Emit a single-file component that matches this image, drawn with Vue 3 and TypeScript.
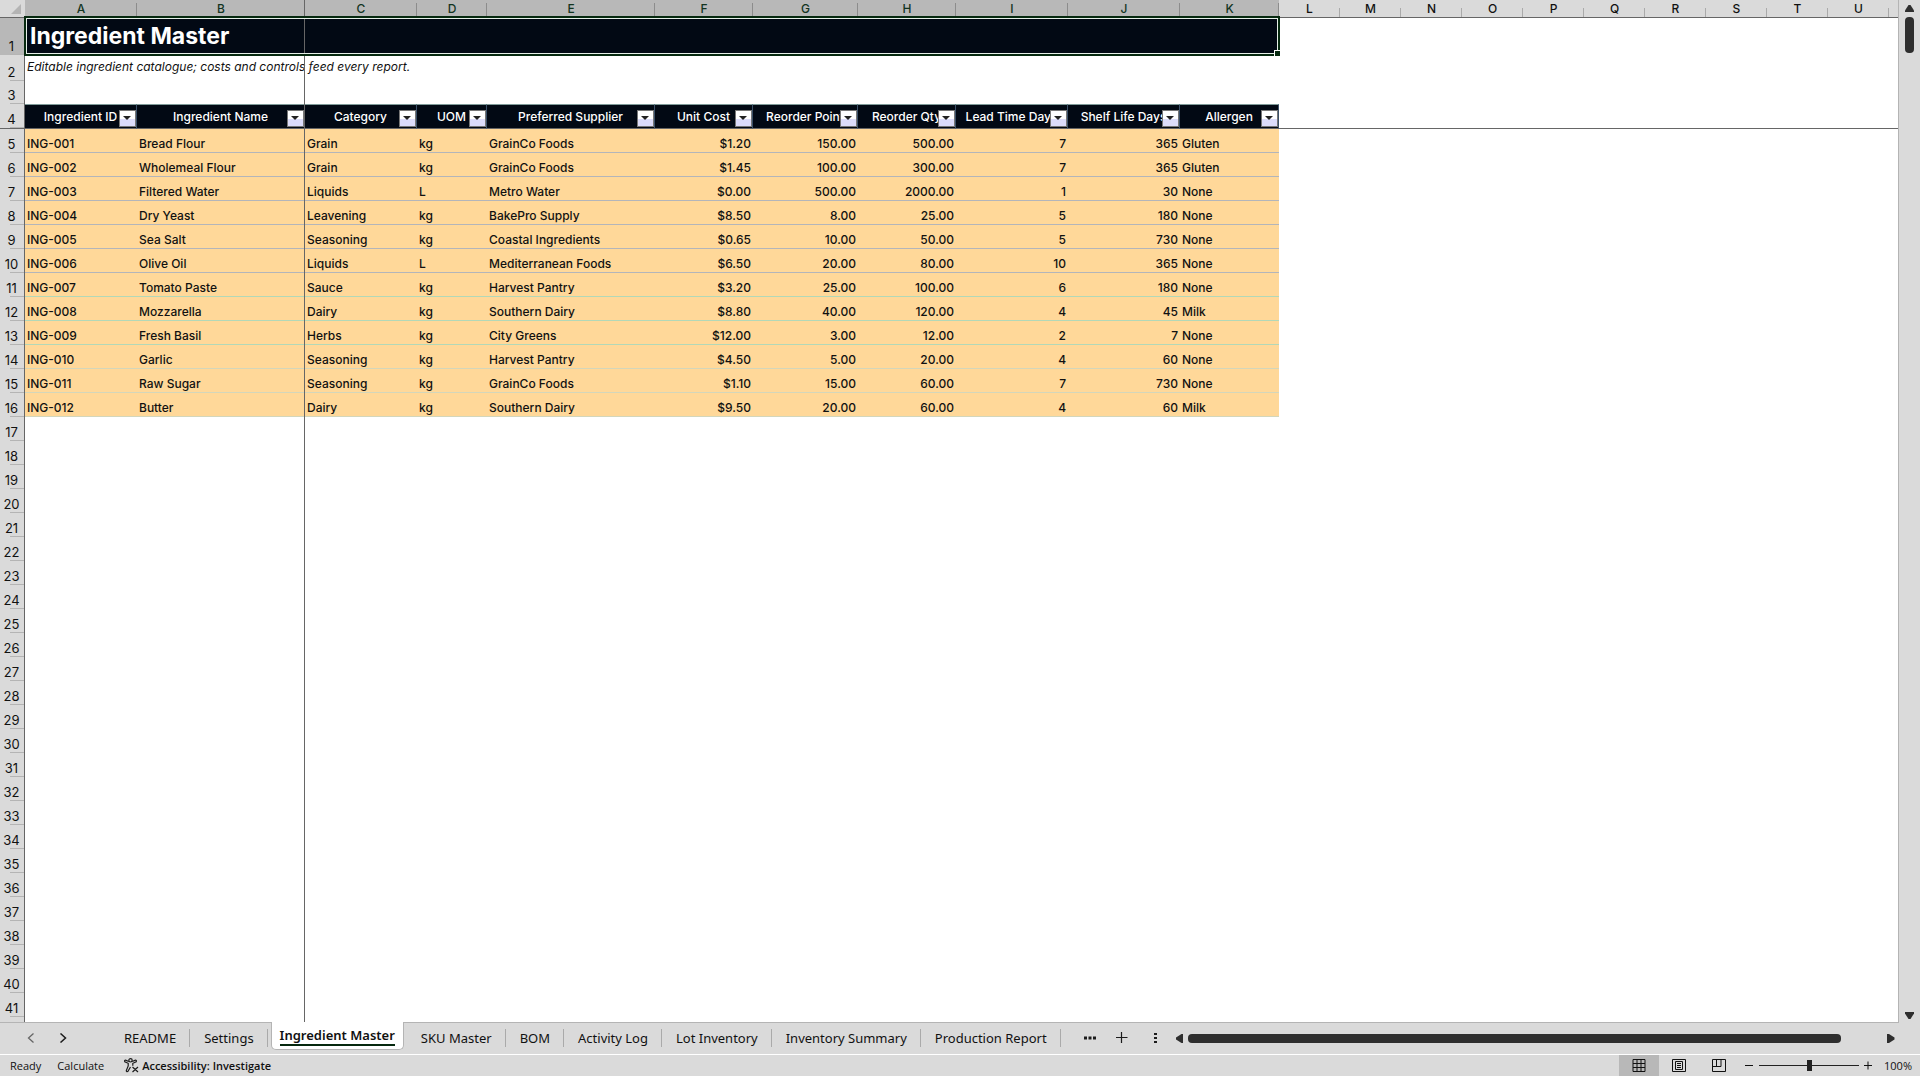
<script setup lang="ts">
import { ref } from 'vue'

interface Column {
  letter: string
  width: number
  title?: string
  numeric?: boolean
}

const columns: Column[] = [
  { letter: 'A', width: 112, title: 'Ingredient ID' },
  { letter: 'B', width: 168, title: 'Ingredient Name' },
  { letter: 'C', width: 112, title: 'Category' },
  { letter: 'D', width: 70, title: 'UOM' },
  { letter: 'E', width: 168, title: 'Preferred Supplier' },
  { letter: 'F', width: 98, title: 'Unit Cost', numeric: true },
  { letter: 'G', width: 105, title: 'Reorder Point', numeric: true },
  { letter: 'H', width: 98, title: 'Reorder Qty', numeric: true },
  { letter: 'I', width: 112, title: 'Lead Time Days', numeric: true },
  { letter: 'J', width: 112, title: 'Shelf Life Days', numeric: true },
  { letter: 'K', width: 99, title: 'Allergen' },
  ...'LMNOPQRSTU'.split('').map((letter) => ({ letter, width: 61 })),
]
const dataColumns = columns.filter((c) => c.title)
const spareColumns = columns.length - dataColumns.length + 1

const ingredients: string[][] = [
  ['ING-001', 'Bread Flour', 'Grain', 'kg', 'GrainCo Foods', '$1.20', '150.00', '500.00', '7', '365', 'Gluten'],
  ['ING-002', 'Wholemeal Flour', 'Grain', 'kg', 'GrainCo Foods', '$1.45', '100.00', '300.00', '7', '365', 'Gluten'],
  ['ING-003', 'Filtered Water', 'Liquids', 'L', 'Metro Water', '$0.00', '500.00', '2000.00', '1', '30', 'None'],
  ['ING-004', 'Dry Yeast', 'Leavening', 'kg', 'BakePro Supply', '$8.50', '8.00', '25.00', '5', '180', 'None'],
  ['ING-005', 'Sea Salt', 'Seasoning', 'kg', 'Coastal Ingredients', '$0.65', '10.00', '50.00', '5', '730', 'None'],
  ['ING-006', 'Olive Oil', 'Liquids', 'L', 'Mediterranean Foods', '$6.50', '20.00', '80.00', '10', '365', 'None'],
  ['ING-007', 'Tomato Paste', 'Sauce', 'kg', 'Harvest Pantry', '$3.20', '25.00', '100.00', '6', '180', 'None'],
  ['ING-008', 'Mozzarella', 'Dairy', 'kg', 'Southern Dairy', '$8.80', '40.00', '120.00', '4', '45', 'Milk'],
  ['ING-009', 'Fresh Basil', 'Herbs', 'kg', 'City Greens', '$12.00', '3.00', '12.00', '2', '7', 'None'],
  ['ING-010', 'Garlic', 'Seasoning', 'kg', 'Harvest Pantry', '$4.50', '5.00', '20.00', '4', '60', 'None'],
  ['ING-011', 'Raw Sugar', 'Seasoning', 'kg', 'GrainCo Foods', '$1.10', '15.00', '60.00', '7', '730', 'None'],
  ['ING-012', 'Butter', 'Dairy', 'kg', 'Southern Dairy', '$9.50', '20.00', '60.00', '4', '60', 'Milk'],
]
const emptyRows = Array.from({ length: 25 }, (_, i) => i + 17)

function ruleTone(index: number): string {
  if (index < 6) return 'rule-grey'
  return index < 9 ? 'rule-green' : 'rule-pale'
}

const tabs = ['README', 'Settings', 'Ingredient Master', 'SKU Master', 'BOM', 'Activity Log', 'Lot Inventory', 'Inventory Summary', 'Production Report']
const activeTab = ref('Ingredient Master')
const zoom = ref(100)
</script>

<template>
  <div class="workbook">
    <main class="body">
      <div class="sheet">
        <table>
          <colgroup>
            <col class="gutter" />
            <col v-for="c in columns" :key="c.letter" :style="{ width: c.width + 'px' }" />
            <col />
          </colgroup>
          <thead>
            <tr class="letters">
              <th class="corner" aria-label="Select all">
                <svg width="10" height="10" viewBox="0 0 10 10"><path d="M10 0v10H0z" fill="#b4b4b4" /></svg>
              </th>
              <th v-for="c in columns" :key="c.letter" scope="col" :class="{ picked: c.title }">{{ c.letter }}</th>
              <th class="rest"></th>
            </tr>
          </thead>
          <tbody>
            <tr class="row-title">
              <th scope="row" class="picked">1</th>
              <td :colspan="dataColumns.length" class="title">
                Ingredient Master
                <span class="selection"><i class="handle"></i></span>
              </td>
              <td :colspan="spareColumns"></td>
            </tr>
            <tr class="row-note">
              <th scope="row">2</th>
              <td :colspan="columns.length + 1" class="note">Editable ingredient catalogue; costs and controls feed every report.</td>
            </tr>
            <tr class="row-gap">
              <th scope="row">3</th>
              <td :colspan="columns.length + 1"></td>
            </tr>
            <tr class="row-fields">
              <th scope="row">4</th>
              <th v-for="c in dataColumns" :key="c.letter" scope="col" class="field">
                {{ c.title }}
                <button type="button" class="filter" :aria-label="'Filter ' + c.title">
                  <svg width="9" height="5" viewBox="0 0 9 5"><path d="M0 0h8L4 4z" fill="#222" /></svg>
                </button>
              </th>
              <td :colspan="spareColumns"></td>
            </tr>
            <tr v-for="(row, r) in ingredients" :key="row[0]" :class="ruleTone(r)">
              <th scope="row">{{ r + 5 }}</th>
              <td v-for="(value, i) in row" :key="i" class="cell" :class="{ number: columns[i].numeric }">{{ value }}</td>
              <td :colspan="spareColumns"></td>
            </tr>
            <tr v-for="n in emptyRows" :key="n">
              <th scope="row">{{ n }}</th>
              <td :colspan="columns.length + 1"></td>
            </tr>
            <tr>
              <th scope="row"></th>
              <td :colspan="columns.length + 1"></td>
            </tr>
          </tbody>
        </table>
        <div class="freeze"></div>
      </div>
      <div class="vscroll">
        <button type="button" aria-label="Scroll up"><svg width="9" height="7" viewBox="0 0 9 7"><path d="M3.500 0h2L9 5.500V7H0V5.500z" fill="#2e2e2e" /></svg></button>
        <div class="vthumb"></div>
        <button type="button" class="down" aria-label="Scroll down"><svg width="9" height="7" viewBox="0 0 9 7"><path d="M3.500 7h2L9 1.500V0H0v1.500z" fill="#2e2e2e" /></svg></button>
      </div>
    </main>

    <div class="tabbar">
      <div class="tabside">
        <div class="arrows">
          <button type="button" aria-label="Previous sheets"><svg width="8" height="10" viewBox="0 0 8 10"><path d="M6.500.5 1.500 5l5 4.500" fill="none" stroke="#666" stroke-width="1.300" /></svg></button>
          <button type="button" aria-label="Next sheets"><svg width="8" height="10" viewBox="0 0 8 10"><path d="M1.500.5 6.500 5l-5 4.500" fill="none" stroke="#1c1c1c" stroke-width="1.500" /></svg></button>
        </div>
        <nav class="tabs" aria-label="Sheets">
          <button v-for="t in tabs" :key="t" type="button" class="tab" :class="{ active: t === activeTab }" @click="activeTab = t">
            <span>{{ t }}</span>
          </button>
        </nav>
        <div class="tools">
          <button type="button" aria-label="More sheets"><svg width="12" height="4" viewBox="0 0 12 4"><path d="M0 .5h3v3H0zM4.500.5h3v3h-3zM9 .5h3v3H9z" fill="#1c1c1c" /></svg></button>
          <button type="button" aria-label="New sheet"><svg width="12" height="12" viewBox="0 0 12 12"><path d="M5.500 0v11M0 5.500h11.500" stroke="#1c1c1c" stroke-width="1.200" /></svg></button>
          <button type="button" aria-label="Resize tabs" class="grip"><svg width="3" height="11" viewBox="0 0 3 11"><path d="M0 0h3v2H0zM0 4h3v2H0zM0 8h3v2H0z" fill="#1c1c1c" /></svg></button>
        </div>
      </div>
      <div class="hscroll">
        <button type="button" aria-label="Scroll left"><svg width="8" height="9" viewBox="0 0 8 9"><path d="M0 3.500 5.500 0H7v9H5.500L0 5.500z" fill="#2e2e2e" /></svg></button>
        <div class="htrack"><div class="hthumb"></div></div>
        <button type="button" aria-label="Scroll right"><svg width="8" height="9" viewBox="0 0 8 9"><path d="M7.500 3.500 2 0H0v9h2l5.500-3.500z" fill="#2e2e2e" /></svg></button>
      </div>
    </div>

    <footer class="status">
      <div class="messages">
        <span>Ready</span>
        <span>Calculate</span>
        <button type="button" class="access">
          <svg width="15" height="15" viewBox="0 0 15 15" fill="none" stroke="#1c1c1c" stroke-width="1.200">
            <circle cx="6.500" cy="2.300" r="1.700" />
            <path d="M4.800 3.500 1.600 2.200Q.2 2.200.8 3.700L4.200 5.300V8L2.300 12.500Q2.300 14 3.800 13.500L6.500 9M8.200 3.500l3.200-1.300q1.400 0 .8 1.500L8.800 5.300v2.500M8.500 9l5.500 5M14 9l-5.500 5" />
          </svg>
          Accessibility: Investigate
        </button>
      </div>
      <div class="views">
        <button type="button" class="on" aria-label="Normal view"><svg width="14" height="13" viewBox="0 0 14 13"><path d="M1 .5h12v12H1zM5 .5v12M9 .5v12M1 4.500h12M1 8.500h12" fill="none" stroke="#111" /></svg></button>
        <button type="button" aria-label="Page layout"><svg width="14" height="13" viewBox="0 0 14 13"><path d="M.5.5h13v12H.5zM3.500 2.500h7v8h-7zM5 4.500h4M5 6.500h4M5 8.500h4" fill="none" stroke="#111" /></svg></button>
        <button type="button" aria-label="Page break preview"><svg width="14" height="13" viewBox="0 0 14 13"><path d="M.5.5h13v12H.5zM4.500.5v7M.5 7.500h8.500V.5" fill="none" stroke="#111" /></svg></button>
      </div>
      <div class="zoom">
        <button type="button" aria-label="Zoom out"><svg width="9" height="9" viewBox="0 0 9 9"><path d="M0 4.500h8" stroke="#111" /></svg></button>
        <input v-model="zoom" type="range" min="0" max="200" aria-label="Zoom" />
        <button type="button" aria-label="Zoom in"><svg width="9" height="9" viewBox="0 0 9 9"><path d="M0 4.500h8M4 .5v8" stroke="#111" /></svg></button>
        <output>{{ zoom }}%</output>
      </div>
    </footer>
  </div>
</template>

<style>
body {
  margin: 0;
}
</style>

<style scoped>
.workbook {
  display: flex;
  flex-direction: column;
  height: 100vh;
  overflow: hidden;
  background: #dadada;
  color: #111;
  font-family: 'Open Sans', 'Noto Sans', sans-serif;
}
button {
  margin: 0;
  padding: 0;
  border: 0;
  background: none;
  color: inherit;
  font: inherit;
}
svg {
  display: block;
}

/* Grid */
.body {
  display: flex;
  flex: 1;
  min-height: 0;
}
.sheet {
  position: relative;
  flex: 1;
  min-width: 0;
  overflow: hidden;
  background: #fff;
  border-right: 1px solid #b4b4b4;
  border-bottom: 1px solid #b4b4b4;
}
table {
  width: 100%;
  table-layout: fixed;
  border-collapse: separate;
  border-spacing: 0;
  font-family: Inter, 'Liberation Sans', sans-serif;
  font-size: 12px;
  line-height: 16px;
}
.gutter {
  width: 25px;
}
tr {
  height: 24px;
}
th,
td {
  box-sizing: border-box;
  padding: 0;
  font-weight: 500;
  white-space: nowrap;
  vertical-align: bottom;
}
th[scope='row'] {
  padding: 0 1px 1px 0;
  border-right: 1px solid #666;
  background: linear-gradient(#b4b4b4, #b4b4b4) right bottom / 14px 1px no-repeat #dadada;
  font-size: 13px;
  font-weight: 400;
}
.letters {
  height: 18px;
}
.letters th {
  border-bottom: 1px solid #666;
  background: linear-gradient(#aaa, #aaa) right bottom / 1px 9px no-repeat #dadada;
  font-size: 12px;
  line-height: 17px;
  text-align: center;
}
.letters .picked {
  background: linear-gradient(#8c8c8c, #8c8c8c) right bottom / 1px 14px no-repeat #b8b8b8;
  color: #12341f;
}
.letters .corner,
.letters .rest {
  background: #dadada;
}
.corner svg {
  margin: 0 0 3px 11px;
}
.row-title {
  height: 37px;
}
.row-title .picked {
  background-color: #b8b8b8;
}
.title {
  position: relative;
  padding: 0 5px 6px;
  background: #020914;
  color: #fff;
  font-size: 23px;
  font-weight: 700;
  line-height: 26px;
}
.selection {
  position: absolute;
  z-index: 2;
  inset: -2px -1px -1px;
  border: 2px solid #06290f;
  box-shadow: inset 0 0 0 1px #e6efe8;
}
.handle {
  position: absolute;
  right: -3px;
  bottom: -3px;
  width: 5px;
  height: 5px;
  border: 1px solid #fff;
  background: #06290f;
}
.row-note {
  height: 26px;
}
.note {
  padding: 0 2px 6px;
  font-style: italic;
  font-weight: 400;
}
.row-gap {
  height: 23px;
}
.row-fields {
  height: 25px;
}
.row-fields > * {
  border-bottom: 1px solid #666;
}
.field {
  position: relative;
  overflow: hidden;
  border-top: 1px solid #7f9a98;
  border-right: 1px solid #3b5068;
  background: #020914;
  color: #fff;
  text-align: center;
  vertical-align: middle;
}
.filter {
  position: absolute;
  right: 0;
  bottom: 1px;
  display: grid;
  place-items: center;
  width: 17px;
  height: 17px;
  border: 1px solid #777;
  background: linear-gradient(#fff 50%, #dcdcfa 50%);
}
.cell {
  padding: 0 2px;
  border-bottom: 1px solid #b3b5ba;
  background: #ffd899;
}
.rule-green .cell {
  border-color: #b2d8b8;
}
.rule-pale .cell {
  border-color: #d3d6bb;
}
.number {
  text-align: right;
}
.freeze {
  position: absolute;
  z-index: 1;
  top: 0;
  bottom: 0;
  left: 304px;
  width: 1px;
  background: #666;
}

/* Scrollbars */
.vscroll {
  display: flex;
  flex-direction: column;
  align-items: center;
  width: 21px;
  padding: 5px 0 4px;
  box-sizing: border-box;
}
.vthumb {
  width: 9px;
  height: 36px;
  margin-top: 5px;
  border-radius: 4px;
  background: #2e2e2e;
}
.down {
  margin-top: auto;
}
.tabbar {
  display: flex;
  height: 30px;
  padding-bottom: 1px;
  border-bottom: 1px solid #fff;
}
.tabside {
  display: flex;
  flex: 0 0 1176px;
}
.hscroll {
  display: flex;
  flex: 1;
  align-items: center;
  gap: 4px;
  padding-right: 25px;
}
.htrack {
  flex: 1;
}
.hthumb {
  width: 94%;
  height: 9px;
  border-radius: 4px;
  background: #2e2e2e;
}

/* Sheet tabs */
.arrows {
  display: flex;
  align-items: center;
  gap: 24px;
  width: 110px;
  padding-left: 27px;
  box-sizing: border-box;
}
.tabs {
  display: flex;
  font-family: 'Noto Sans', 'Open Sans', sans-serif;
  font-size: 13px;
  line-height: 18px;
}
.tab {
  position: relative;
  height: 30px;
  padding: 0 14px;
  white-space: nowrap;
}
.tab::after {
  content: '';
  position: absolute;
  top: 6px;
  right: 0;
  width: 1px;
  height: 18px;
  background: #aaa;
}
.tab.active {
  height: 28px;
  margin: -1px 3px 0;
  padding: 0 8px;
  border: 1px solid #b4b4b4;
  border-top: 0;
  border-radius: 0 0 5px 5px;
  background: #fff;
  font-weight: 600;
}
.tab.active::after {
  display: none;
}
.tab.active span {
  display: block;
  border-bottom: 2px solid #06290f;
}
.tools {
  display: flex;
  align-items: center;
  gap: 20px;
  margin-left: auto;
  padding-right: 19px;
}
.grip {
  margin-left: 6px;
}

/* Status bar */
.status {
  display: flex;
  align-items: center;
  height: 21px;
  padding: 0 8px 0 10px;
  font-size: 11px;
}
.messages {
  display: flex;
  align-items: center;
  gap: 16px;
}
.access {
  display: flex;
  align-items: center;
  gap: 3px;
  margin-left: 4px;
  font-weight: 600;
}
.views {
  display: flex;
  align-self: stretch;
  margin-left: auto;
}
.views button {
  display: grid;
  place-items: center;
  width: 40px;
}
.views .on {
  background: #b8b8b8;
}
.zoom {
  display: flex;
  align-items: center;
  gap: 5px;
  padding-left: 6px;
}
.zoom input {
  width: 100px;
  height: 11px;
  margin: 0;
  appearance: none;
  background: linear-gradient(#222, #222) center / 100% 1px no-repeat;
}
.zoom input::-webkit-slider-thumb {
  width: 5px;
  height: 11px;
  appearance: none;
  background: #222;
}
.zoom output {
  margin-left: 6px;
}
</style>
